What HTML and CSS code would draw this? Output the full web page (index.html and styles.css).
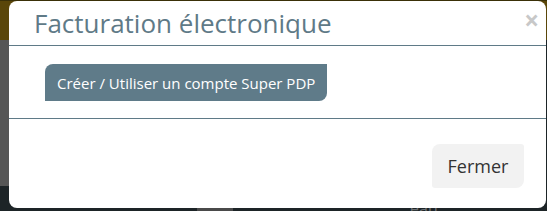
FILE: index.html
```html
<!DOCTYPE html>
<html lang="fr">
<head>
    <meta charset="UTF-8">
    <meta name="viewport" content="width=device-width, initial-scale=1.0">
    <title>Facturation électronique</title>
    <link rel="stylesheet" href="styles.css">
</head>
<body>

<!-- Page behind the overlay -->
<div class="backdrop">
    <div class="backdrop-top"></div>
    <div class="backdrop-main">
        <div class="backdrop-side"></div>
    </div>
    <div class="backdrop-bottom">
        <span class="tab"></span>
        <span class="ghost">eau</span>
    </div>
</div>

<!-- Modal -->
<div class="modal">
    <div class="modal-header">
        <h3 class="modal-title">Facturation électronique</h3>
        <span class="close">&times;</span>
    </div>
    <div class="modal-body">
        <button class="btn-primary">Créer / Utiliser un compte Super PDP</button>
    </div>
    <div class="modal-footer">
        <button class="btn-default">Fermer</button>
    </div>
</div>

</body>
</html>
```

FILE: styles.css
```css
body {
    margin: 0;
    width: 547px;
    height: 211px;
    overflow: hidden;
    font-family: "Open Sans", "Noto Sans", sans-serif;
    background-color: #1d2427;
}

.backdrop {
    display: flex;
    flex-direction: column;
    height: 211px;
}

.backdrop-top {
    height: 40px;
    background-color: #5a4609;
    border-top: 1px solid #3a3008;
    box-sizing: border-box;
}

.backdrop-main {
    height: 146px;
    display: flex;
}

.backdrop-side {
    width: 9px;
    background-color: #565656;
}

.backdrop-bottom {
    flex: 1;
    position: relative;
    overflow: hidden;
    background-color: #1d2427;
}

.backdrop-bottom .tab {
    position: absolute;
    left: 197px;
    bottom: 0;
    width: 36px;
    height: 4px;
    background-color: #4a4a4a;
}

.backdrop-bottom .ghost {
    position: absolute;
    left: 410px;
    top: 14px;
    font-size: 16px;
    line-height: 16px;
    color: #6b6f72;
}

.modal {
    position: absolute;
    left: 9px;
    top: 1px;
    width: 537px;
    height: 207px;
    background-color: #fff;
    border-radius: 8px;
    display: flex;
    flex-direction: column;
}

.modal-header {
    height: 44px;
    padding: 0 7px 0 25px;
    display: flex;
    align-items: center;
    justify-content: space-between;
    border-bottom: 1px solid #5f7a87;
}

.modal-title {
    margin: 0;
    font-size: 26px;
    font-weight: normal;
    color: #5f7a87;
}

.close {
    font-size: 26px;
    font-weight: bold;
    color: #c8c8c8;
    line-height: 1;
    margin-top: -6px;
}

.modal-body {
    padding: 18px 36px 17px;
    border-bottom: 1px solid #5f7a87;
}

.btn-primary {
    height: 37px;
    padding: 0 12px;
    border: none;
    border-radius: 8px 0 8px 0;
    background-color: #5f7b89;
    color: #fff;
    font-family: "Open Sans", "Noto Sans", sans-serif;
    font-size: 15px;
}

.modal-footer {
    padding: 25px 22px 0 0;
    display: flex;
    justify-content: flex-end;
}

.btn-default {
    width: 92px;
    height: 44px;
    border: none;
    border-radius: 8px 3px 8px 3px;
    background-color: #f2f2f2;
    color: #333;
    font-family: "Open Sans", "Noto Sans", sans-serif;
    font-size: 18px;
}
```
